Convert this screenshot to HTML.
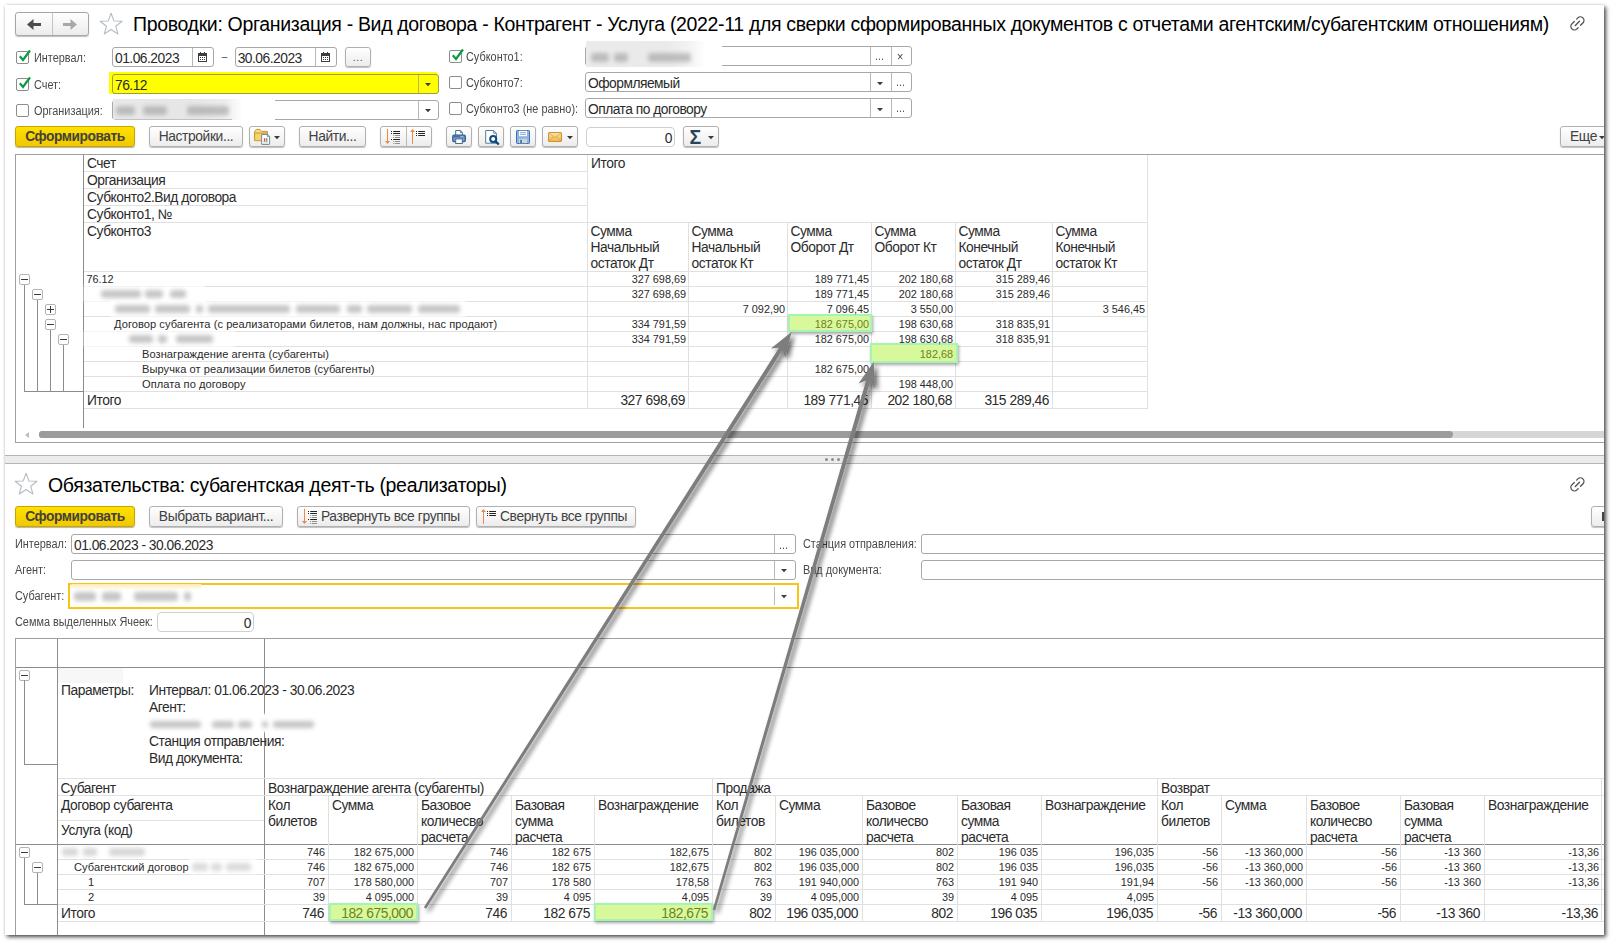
<!DOCTYPE html>
<html lang="ru"><head><meta charset="utf-8"><title>1C</title>
<style>
html,body{margin:0;padding:0;background:#fff;}
body{width:1613px;height:944px;overflow:hidden;position:relative;font-family:"Liberation Sans",sans-serif;color:#222;}
#frame{position:absolute;left:5px;top:5px;width:1599px;height:930px;background:#fff;overflow:hidden;}
#shadow{position:absolute;left:5px;top:5px;width:1599px;height:930px;box-shadow:2px 2px 4px rgba(0,0,0,.7), 0 0 2px rgba(0,0,0,.12);}
#in{position:absolute;left:-5px;top:-5px;width:1613px;height:944px;}
#in div{position:absolute;box-sizing:border-box;}
.t{white-space:nowrap;line-height:16px;font-size:12.85px;color:#222;}
.h{font-size:13.8px;letter-spacing:-0.445px;color:#2b2b2b;}
.r{text-align:right;}
.lab{font-size:12px;color:#4a4a4a;line-height:14px;transform:scaleX(0.908);transform-origin:0 0;}
.inp{border:1px solid #a8a8a8;border-radius:3px;background:#fff;}
.it{font-size:13.8px;letter-spacing:-0.5px;color:#2a2a2a;line-height:16px;}
.btn{border:1px solid #b0b0b0;border-radius:3px;background:linear-gradient(#fff,#ececec);box-shadow:0 1px 1px rgba(0,0,0,.25);}
.bt{font-size:13.8px;letter-spacing:-0.38px;color:#414141;line-height:18px;text-align:center;white-space:nowrap;}
.ybtn{border:1px solid #c8a500;border-radius:3px;background:linear-gradient(#ffe100,#f0c800);box-shadow:0 1px 1px rgba(0,0,0,.3);}
.d{font-size:11.1px;line-height:14px;letter-spacing:0.05px;color:#2a2a2a;}
.cb{border:1px solid #8c8c8c;border-radius:2px;background:#fff;}
.blur{filter:blur(2.5px);background:#c9c9c9;border-radius:4px;}
.tri{width:0;height:0;border-left:2.5px solid transparent;border-right:2.5px solid transparent;border-top:3px solid #444;}
svg{position:absolute;overflow:visible;}
.n{font-size:10.85px;letter-spacing:0;}
.hl{color:#6f7f1f !important;}

</style></head>
<body>
<div id="shadow"></div><div id="frame"><div id="in">
<div class="btn" style="left:15px;top:12px;width:74px;height:24px;border-color:#a6a6a6;"></div>
<div class="l" style="left:52px;top:13px;width:1px;height:22px;background:#c4c4c4"></div>
<svg style="left:15px;top:12px" width="74" height="25" viewBox="0 0 74 25"><path d="M12 12.5 L18.5 7 V11 H26 V14 H18.5 V18 Z" fill="#4d4d4d"/><path d="M62 12.5 L55.5 7 V11 H48 V14 H55.5 V18 Z" fill="#a9a9a9"/></svg>
<svg style="left:99.4px;top:12.2px" width="24.2" height="23.7" viewBox="0 0 22 22" preserveAspectRatio="none"><path d="M11 1.2 L13.6 8.3 L21 8.6 L15.2 13.2 L17.2 20.4 L11 16.2 L4.8 20.4 L6.8 13.2 L1 8.6 L8.4 8.3 Z" fill="#fff" stroke="#b4bcc4" stroke-width="1" stroke-linejoin="round"/></svg>
<div class="t " style="left:133px;top:13px;font-size:19.5px;letter-spacing:-0.33px;line-height:22px;color:#000;">Проводки: Организация - Вид договора - Контрагент - Услуга (2022-11 для сверки сформированных документов с отчетами агентским/субагентским отношениям)</div>
<svg style="left:1569px;top:15px" width="16.8" height="16.8" viewBox="0 0 16 16"><g transform="rotate(-45 8 8)" fill="none" stroke="#505050" stroke-width="1.25" stroke-linecap="round"><path d="M7.2 4.6 H4 A3.4 3.4 0 0 0 4 11.4 H5.6"/><path d="M8.8 11.4 H12 A3.4 3.4 0 0 0 12 4.6 H10.4"/><path d="M5.2 8 H10.8"/></g></svg>
<div class="cb" style="left:16px;top:51px;width:13px;height:13px;"><svg style="left:1px;top:-3px" width="14" height="14" viewBox="0 0 14 14"><path d="M1.8 7.2 L5 11 L12 1.5" fill="none" stroke="#0a9a46" stroke-width="2.2"/></svg></div>
<div class="t lab" style="left:33.8px;top:51px;">Интервал:</div>
<div class="inp" style="left:112px;top:47px;width:102px;height:20px;"></div>
<div class="l" style="left:192px;top:48px;width:1px;height:18px;background:#b8b8b8"></div>
<div class="t it" style="left:115px;top:51px;">01.06.2023</div>
<svg style="left:198px;top:52px" width="9" height="10" viewBox="0 0 9 10" shape-rendering="crispEdges"><rect x="0" y="1" width="9" height="9" rx="1" fill="#3e3e3e"/><rect x="1" y="4" width="7" height="5" fill="#fff"/><rect x="2" y="0" width="1" height="2" fill="#3e3e3e"/><rect x="6" y="0" width="1" height="2" fill="#3e3e3e"/><path d="M2 5.5 h1 M4 5.5 h1 M6 5.5 h1 M2 7.5 h1 M4 7.5 h1 M6 7.5 h1" stroke="#3e3e3e" stroke-width="1"/></svg>
<div class="t " style="left:221.7px;top:50px;font-size:10px;line-height:14px;color:#444;">–</div>
<div class="inp" style="left:235px;top:47px;width:102px;height:20px;"></div>
<div class="l" style="left:315px;top:48px;width:1px;height:18px;background:#b8b8b8"></div>
<div class="t it" style="left:237.7px;top:51px;">30.06.2023</div>
<svg style="left:321px;top:52px" width="9" height="10" viewBox="0 0 9 10" shape-rendering="crispEdges"><rect x="0" y="1" width="9" height="9" rx="1" fill="#3e3e3e"/><rect x="1" y="4" width="7" height="5" fill="#fff"/><rect x="2" y="0" width="1" height="2" fill="#3e3e3e"/><rect x="6" y="0" width="1" height="2" fill="#3e3e3e"/><path d="M2 5.5 h1 M4 5.5 h1 M6 5.5 h1 M2 7.5 h1 M4 7.5 h1 M6 7.5 h1" stroke="#3e3e3e" stroke-width="1"/></svg>
<div class="btn" style="left:345px;top:46.5px;width:26px;height:20.5px;"><div class="t" style="left:0;width:100%;top:1px;text-align:center;font-size:11px;color:#555;letter-spacing:0.5px">...</div></div>
<div class="cb" style="left:449px;top:50px;width:13px;height:13px;"><svg style="left:1px;top:-3px" width="14" height="14" viewBox="0 0 14 14"><path d="M1.8 7.2 L5 11 L12 1.5" fill="none" stroke="#0a9a46" stroke-width="2.2"/></svg></div>
<div class="t lab" style="left:466.2px;top:50.3px;">Субконто1:</div>
<div class="inp" style="left:585px;top:46px;width:327px;height:20px;"></div>
<div class="l" style="left:870px;top:47px;width:1px;height:18px;background:#b8b8b8"></div>
<div class="l" style="left:891px;top:47px;width:1px;height:18px;background:#b8b8b8"></div>
<div class="t lab" style="left:875px;top:49px;color:#555">...</div>
<div class="t lab" style="left:897px;top:50px;font-size:12px;color:#444">×</div>
<div style="left:586px;top:41px;width:136px;height:25.5px;background:linear-gradient(90deg,#ebebeb,#eaeaea 60%,#f2f2f2 75%,#fff 88%);"></div>
<div style="left:586px;top:41px;width:136px;height:25.5px;filter:blur(2px);opacity:0.5;"><div style="left:5px;top:11.5px;width:18px;height:9px;background:#8e8e8e;border-radius:3px;"></div><div style="left:28px;top:11.5px;width:14px;height:9px;background:#8e8e8e;border-radius:3px;"></div><div style="left:62px;top:11.5px;width:43px;height:9px;background:#8e8e8e;border-radius:3px;"></div></div>
<div class="cb" style="left:16px;top:78px;width:13px;height:13px;"><svg style="left:1px;top:-3px" width="14" height="14" viewBox="0 0 14 14"><path d="M1.8 7.2 L5 11 L12 1.5" fill="none" stroke="#0a9a46" stroke-width="2.2"/></svg></div>
<div class="t lab" style="left:33.8px;top:78px;">Счет:</div>
<div class="" style="left:109px;top:72px;width:328px;height:22px;background:#ffff00;"></div>
<div class="inp" style="left:112px;top:74px;width:327px;height:20px;background:#ffff00;border-color:#9c9c46;"></div>
<div class="l" style="left:418px;top:75px;width:1px;height:18px;background:#b8b85a"></div>
<div class="t it" style="left:115px;top:78px;">76.12</div>
<svg style="left:424.5px;top:82.6px" width="6" height="4" viewBox="0 0 6 4"><path d="M0 0 H6 L3 3.3 Z" fill="#3a3a3a"/></svg>
<div class="cb" style="left:449px;top:76px;width:13px;height:13px;"></div>
<div class="t lab" style="left:466.2px;top:76.3px;">Субконто7:</div>
<div class="inp" style="left:585px;top:72px;width:327px;height:20px;"></div>
<div class="l" style="left:870px;top:73px;width:1px;height:18px;background:#b8b8b8"></div>
<div class="l" style="left:891px;top:73px;width:1px;height:18px;background:#b8b8b8"></div>
<div class="t it" style="left:588px;top:76px;">Оформляемый</div>
<svg style="left:876.5px;top:81.6px" width="6" height="4" viewBox="0 0 6 4"><path d="M0 0 H6 L3 3.3 Z" fill="#3a3a3a"/></svg>
<div class="t lab" style="left:896px;top:75px;color:#555">...</div>
<div class="cb" style="left:16px;top:104px;width:13px;height:13px;"></div>
<div class="t lab" style="left:33.8px;top:104px;">Организация:</div>
<div class="inp" style="left:112px;top:100px;width:327px;height:20px;"></div>
<div class="l" style="left:418px;top:101px;width:1px;height:18px;background:#b8b8b8"></div>
<svg style="left:424.5px;top:108.6px" width="6" height="4" viewBox="0 0 6 4"><path d="M0 0 H6 L3 3.3 Z" fill="#3a3a3a"/></svg>
<div style="left:113px;top:99px;width:162px;height:20.5px;background:linear-gradient(90deg,#e9e9e9,#e6e6e6 50%,#ececec 68%,#fff 80%);"></div>
<div style="left:113px;top:99px;width:162px;height:20.5px;filter:blur(2px);opacity:0.5;"><div style="left:3px;top:6.5px;width:19px;height:9px;background:#8e8e8e;border-radius:3px;"></div><div style="left:30px;top:6.5px;width:24px;height:9px;background:#8e8e8e;border-radius:3px;"></div><div style="left:74px;top:6.5px;width:42px;height:9px;background:#8e8e8e;border-radius:3px;"></div></div>
<div class="l" style="left:115px;top:119px;width:117px;height:1px;background:#c2c2c2"></div>
<div class="cb" style="left:449px;top:102px;width:13px;height:13px;"></div>
<div class="t lab" style="left:466.2px;top:102.3px;">Субконто3 (не равно):</div>
<div class="inp" style="left:585px;top:98px;width:327px;height:20px;"></div>
<div class="l" style="left:870px;top:99px;width:1px;height:18px;background:#b8b8b8"></div>
<div class="l" style="left:891px;top:99px;width:1px;height:18px;background:#b8b8b8"></div>
<div class="t it" style="left:588px;top:102px;">Оплата по договору</div>
<svg style="left:876.5px;top:107.6px" width="6" height="4" viewBox="0 0 6 4"><path d="M0 0 H6 L3 3.3 Z" fill="#3a3a3a"/></svg>
<div class="t lab" style="left:896px;top:101px;color:#555">...</div>
<div class="ybtn" style="left:15px;top:126px;width:120px;height:21px;"><div class="t" style="left:0;width:100%;top:1px;text-align:center;font-size:13.8px;letter-spacing:-0.47px;font-weight:bold;color:#45423a;line-height:17px">Сформировать</div></div>
<div class="btn" style="left:149px;top:126px;width:94px;height:21px;"><div class="bt" style="left:0;width:100%;top:1px">Настройки...</div></div>
<div class="btn" style="left:249px;top:126px;width:36px;height:21px;"></div>
<svg style="left:253px;top:128px" width="19" height="18" viewBox="0 0 19 18"><path d="M1.6 12.6 V3.6 L3.4 1.4 H7 L8.8 3.4 H14.4 V6" fill="#f9de7c" stroke="#c9953a" stroke-width="1" stroke-linejoin="round"/><rect x="1.6" y="5" width="12.8" height="7.7" rx="0.6" fill="#f5d468" stroke="#c9953a" stroke-width="1"/><path d="M8.6 7.2 Q8.6 6.4 9.4 6.4 H14.3 L16.6 8.7 V15.6 Q16.6 16.4 15.8 16.4 H9.4 Q8.6 16.4 8.6 15.6 Z" fill="#fff" stroke="#7d91a3" stroke-width="1.1"/><path d="M14.3 6.4 V8.7 H16.6" fill="#aab8c4" stroke="#7d91a3" stroke-width="0.8"/><rect x="10.9" y="10.2" width="1.4" height="3.3" fill="#f0453a"/><rect x="13" y="10.2" width="1.4" height="3.3" fill="#4cb84c"/><path d="M10.2 13.9 H15.1" stroke="#9a9a9a" stroke-width="0.7"/></svg>
<svg style="left:274.0px;top:136.0px" width="6" height="4" viewBox="0 0 6 4"><path d="M0 0 H6 L3 3.3 Z" fill="#3a3a3a"/></svg>
<div class="btn" style="left:299px;top:126px;width:67px;height:21px;"><div class="bt" style="left:0;width:100%;top:1px">Найти...</div></div>
<div class="btn" style="left:380px;top:126px;width:52px;height:21px;"></div>
<div class="l" style="left:406px;top:127px;width:1px;height:20px;background:#bcbcbc"></div>
<svg style="left:384px;top:128px" width="18" height="17" viewBox="0 0 18 17"><path d="M3.5 0.9 V14" stroke="#f0884a" stroke-width="1" fill="none"/><path d="M1 13 H6 L3.5 15.9 Z" fill="#f0884a"/><rect x="7" y="3" width="1" height="1" fill="#222"/><rect x="9.2" y="3" width="6.8" height="1" fill="#222"/><rect x="7" y="5" width="1" height="1" fill="#222"/><rect x="9.2" y="5" width="6.8" height="1" fill="#222"/><rect x="7" y="11" width="1" height="1" fill="#222"/><rect x="9.2" y="11" width="6.8" height="1" fill="#222"/><rect x="9.2" y="7" width="1" height="1" fill="#909090"/><rect x="11" y="7" width="5" height="1" fill="#909090"/><rect x="9.2" y="9" width="1" height="1" fill="#909090"/><rect x="11" y="9" width="5" height="1" fill="#909090"/><rect x="9.2" y="13" width="1" height="1" fill="#909090"/><rect x="11" y="13" width="5" height="1" fill="#909090"/><rect x="9.2" y="15" width="1" height="1" fill="#909090"/><rect x="11" y="15" width="5" height="1" fill="#909090"/></svg>
<svg style="left:408px;top:128px" width="18" height="17" viewBox="0 0 18 17"><path d="M4.5 3 V15.9" stroke="#f0884a" stroke-width="1" fill="none"/><path d="M2 3.9 H7 L4.5 0.9 Z" fill="#f0884a"/><rect x="8" y="3" width="1" height="1" fill="#222"/><rect x="10.2" y="3" width="6.8" height="1" fill="#222"/><rect x="8" y="5" width="1" height="1" fill="#222"/><rect x="10.2" y="5" width="6.8" height="1" fill="#222"/><rect x="8" y="7" width="1" height="1" fill="#222"/><rect x="10.2" y="7" width="6.8" height="1" fill="#222"/></svg>
<div class="btn" style="left:446px;top:126px;width:26px;height:21px;"></div>
<svg style="left:451px;top:129px" width="16" height="16" viewBox="0 0 16 16"><path d="M4.7 6 V1.5 H9.3 L11.3 3.5 V6" fill="#fff" stroke="#4a6a90" stroke-width="1"/><path d="M9.3 1.5 V3.5 H11.3" fill="none" stroke="#4a6a90" stroke-width="0.8"/><rect x="1.8" y="6.2" width="12.5" height="6.4" rx="1.3" fill="#7aa0cd" stroke="#2f5b8c" stroke-width="1.3"/><rect x="2.4" y="6.6" width="11.3" height="1.8" fill="#3f6ea3"/><rect x="9.6" y="7" width="1" height="0.9" fill="#fff"/><rect x="11.4" y="7" width="1" height="0.9" fill="#fff"/><rect x="4.7" y="9.9" width="6.6" height="4.6" fill="#fff" stroke="#4a6a90" stroke-width="1"/></svg>
<div class="btn" style="left:478px;top:126px;width:26px;height:21px;"></div>
<svg style="left:484px;top:129px" width="16" height="16" viewBox="0 0 16 16"><path d="M1.7 1.5 H9.6 L12.4 4.3 V14.2 H1.7 Z" fill="#fff" stroke="#5b7a9b" stroke-width="1"/><path d="M9.6 1.5 V4.3 H12.4" fill="none" stroke="#5b7a9b" stroke-width="0.8"/><circle cx="9.2" cy="10.1" r="3" fill="#fff" stroke="#0b4a80" stroke-width="2"/><path d="M11.5 12.4 L14.2 14.8" stroke="#0b4a80" stroke-width="2.4" stroke-linecap="round"/></svg>
<div class="btn" style="left:510px;top:126px;width:26px;height:21px;"></div>
<svg style="left:516px;top:130px" width="14" height="14" viewBox="0 0 14 14"><rect x="0.5" y="0.5" width="13" height="13" rx="0.8" fill="#8cb3e3" stroke="#3f6fae" stroke-width="1"/><rect x="3" y="0.8" width="8" height="5.4" fill="#fff"/><path d="M4 2.6 h6 M4 4.4 h6" stroke="#7fa3cf" stroke-width="0.9"/><rect x="3" y="8.8" width="8" height="4.4" fill="#cfd6d2"/><rect x="4.2" y="9.8" width="1.7" height="3.2" fill="#3f6fae"/></svg>
<div class="btn" style="left:542px;top:126px;width:36px;height:21px;"></div>
<svg style="left:547.5px;top:132.3px" width="14" height="10" viewBox="0 0 16 12" preserveAspectRatio="none"><defs><linearGradient id="mg" x1="0" y1="0" x2="0" y2="1"><stop offset="0" stop-color="#fbe4ac"/><stop offset="1" stop-color="#f0b646"/></linearGradient></defs><rect x="0.6" y="0.6" width="14.8" height="10.8" rx="1.3" fill="url(#mg)" stroke="#cf9230" stroke-width="1.2"/><path d="M1 1 L8 7 L15 1 M1 11 L6 6 M15 11 L10 6" fill="none" stroke="#d9a040" stroke-width="0.9"/></svg>
<svg style="left:566.5px;top:136.0px" width="6" height="4" viewBox="0 0 6 4"><path d="M0 0 H6 L3 3.3 Z" fill="#3a3a3a"/></svg>
<div class="inp" style="left:586px;top:127px;width:89px;height:20px;border-color:#cfcfcf;border-radius:4px;"></div>
<div class="t r it" style="left:372px;width:300px;top:131px;">0</div>
<div class="btn" style="left:683px;top:126px;width:36px;height:21px;"></div>
<div class="t " style="left:689.5px;top:126px;font-size:19.5px;font-weight:bold;color:#2a4358;line-height:22px;">Σ</div>
<svg style="left:707.8px;top:136.2px" width="6" height="4" viewBox="0 0 6 4"><path d="M0 0 H6 L3 3.3 Z" fill="#3a3a3a"/></svg>
<div class="btn" style="left:1560px;top:126px;width:60px;height:21px;"><div class="bt" style="left:9px;top:1px">Еще</div></div>
<svg style="left:1598.5px;top:136.0px" width="6" height="4" viewBox="0 0 6 4"><path d="M0 0 H6 L3 3.3 Z" fill="#3a3a3a"/></svg>
<div class="" style="left:15px;top:154px;width:1600px;height:289px;border:1px solid #a0a0a0;border-right:none;background:#fff;"></div>
<div class="l" style="left:83px;top:155px;width:1px;height:273px;background:#8c8c8c"></div>
<div class="l" style="left:84px;top:171px;width:503px;height:1px;background:#e0e0e0"></div>
<div class="l" style="left:84px;top:188px;width:503px;height:1px;background:#e0e0e0"></div>
<div class="l" style="left:84px;top:205px;width:503px;height:1px;background:#e0e0e0"></div>
<div class="l" style="left:84px;top:222px;width:1064px;height:1px;background:#e0e0e0"></div>
<div class="l" style="left:84px;top:271px;width:1064px;height:1px;background:#e0e0e0"></div>
<div class="l" style="left:84px;top:286px;width:1064px;height:1px;background:#e0e0e0"></div>
<div class="l" style="left:84px;top:301px;width:1064px;height:1px;background:#e0e0e0"></div>
<div class="l" style="left:84px;top:316px;width:1064px;height:1px;background:#e0e0e0"></div>
<div class="l" style="left:84px;top:331px;width:1064px;height:1px;background:#e0e0e0"></div>
<div class="l" style="left:84px;top:346px;width:1064px;height:1px;background:#e0e0e0"></div>
<div class="l" style="left:84px;top:361px;width:1064px;height:1px;background:#e0e0e0"></div>
<div class="l" style="left:84px;top:376px;width:1064px;height:1px;background:#e0e0e0"></div>
<div class="l" style="left:84px;top:391px;width:1064px;height:1px;background:#e0e0e0"></div>
<div class="l" style="left:84px;top:408px;width:1064px;height:1px;background:#e0e0e0"></div>
<div class="l" style="left:587px;top:155px;width:1px;height:253px;background:#e0e0e0"></div>
<div class="l" style="left:1147px;top:155px;width:1px;height:253px;background:#e0e0e0"></div>
<div class="l" style="left:688px;top:223px;width:1px;height:185px;background:#e0e0e0"></div>
<div class="l" style="left:787px;top:223px;width:1px;height:185px;background:#e0e0e0"></div>
<div class="l" style="left:871px;top:223px;width:1px;height:185px;background:#e0e0e0"></div>
<div class="l" style="left:955px;top:223px;width:1px;height:185px;background:#e0e0e0"></div>
<div class="l" style="left:1052px;top:223px;width:1px;height:185px;background:#e0e0e0"></div>
<div class="t h" style="left:87px;top:156px;">Счет</div>
<div class="t h" style="left:87px;top:173px;">Организация</div>
<div class="t h" style="left:87px;top:190px;">Субконто2.Вид договора</div>
<div class="t h" style="left:87px;top:207px;">Субконто1, №</div>
<div class="t h" style="left:87px;top:224px;">Субконто3</div>
<div class="t h" style="left:591px;top:156px;">Итого</div>
<div class="t h" style="left:590.5px;top:224px;">Сумма</div>
<div class="t h" style="left:590.5px;top:240px;">Начальный</div>
<div class="t h" style="left:590.5px;top:256px;">остаток Дт</div>
<div class="t h" style="left:691.5px;top:224px;">Сумма</div>
<div class="t h" style="left:691.5px;top:240px;">Начальный</div>
<div class="t h" style="left:691.5px;top:256px;">остаток Кт</div>
<div class="t h" style="left:790.5px;top:224px;">Сумма</div>
<div class="t h" style="left:790.5px;top:240px;">Оборот Дт</div>
<div class="t h" style="left:874.5px;top:224px;">Сумма</div>
<div class="t h" style="left:874.5px;top:240px;">Оборот Кт</div>
<div class="t h" style="left:958.5px;top:224px;">Сумма</div>
<div class="t h" style="left:958.5px;top:240px;">Конечный</div>
<div class="t h" style="left:958.5px;top:256px;">остаток Дт</div>
<div class="t h" style="left:1055.5px;top:224px;">Сумма</div>
<div class="t h" style="left:1055.5px;top:240px;">Конечный</div>
<div class="t h" style="left:1055.5px;top:256px;">остаток Кт</div>
<div class="" style="left:788px;top:314px;width:84px;height:17.5px;background:#d8f99b;border:2.5px solid #a5f4b4;box-shadow:1px 2px 3px rgba(0,0,0,.35);"></div>
<div class="" style="left:870px;top:343px;width:88px;height:20px;background:#d8f99b;border:2.5px solid #a5f4b4;box-shadow:1px 2px 3px rgba(0,0,0,.35);"></div>
<div class="t d n" style="left:86.5px;top:272px;">76.12</div>
<div class="t r d n" style="left:386px;width:300px;top:272px;">327 698,69</div>
<div class="t r d n" style="left:569px;width:300px;top:272px;">189 771,45</div>
<div class="t r d n" style="left:653px;width:300px;top:272px;">202 180,68</div>
<div class="t r d n" style="left:750px;width:300px;top:272px;">315 289,46</div>
<div class="t r d n" style="left:386px;width:300px;top:287px;">327 698,69</div>
<div class="t r d n" style="left:569px;width:300px;top:287px;">189 771,45</div>
<div class="t r d n" style="left:653px;width:300px;top:287px;">202 180,68</div>
<div class="t r d n" style="left:750px;width:300px;top:287px;">315 289,46</div>
<div class="t r d n" style="left:485px;width:300px;top:302px;">7 092,90</div>
<div class="t r d n" style="left:569px;width:300px;top:302px;">7 096,45</div>
<div class="t r d n" style="left:653px;width:300px;top:302px;">3 550,00</div>
<div class="t r d n" style="left:845px;width:300px;top:302px;">3 546,45</div>
<div class="t d" style="left:114px;top:317px;">Договор субагента (с реализаторами билетов, нам должны, нас продают)</div>
<div class="t r d n" style="left:386px;width:300px;top:317px;">334 791,59</div>
<div class="t r d n hl" style="left:569px;width:300px;top:317px;">182 675,00</div>
<div class="t r d n" style="left:653px;width:300px;top:317px;">198 630,68</div>
<div class="t r d n" style="left:750px;width:300px;top:317px;">318 835,91</div>
<div class="t r d n" style="left:386px;width:300px;top:332px;">334 791,59</div>
<div class="t r d n" style="left:569px;width:300px;top:332px;">182 675,00</div>
<div class="t r d n" style="left:653px;width:300px;top:332px;">198 630,68</div>
<div class="t r d n" style="left:750px;width:300px;top:332px;">318 835,91</div>
<div class="t d" style="left:142px;top:347px;">Вознаграждение агента (субагенты)</div>
<div class="t r d n hl" style="left:653px;width:300px;top:347px;">182,68</div>
<div class="t d" style="left:142px;top:362px;">Выручка от реализации билетов (субагенты)</div>
<div class="t r d n" style="left:569px;width:300px;top:362px;">182 675,00</div>
<div class="t d" style="left:142px;top:377px;">Оплата по договору</div>
<div class="t r d n" style="left:653px;width:300px;top:377px;">198 448,00</div>
<div style="left:85px;top:287px;width:119px;height:14px;background:#fff;box-shadow:0 0 2px 1px #fff;"></div>
<div style="left:85px;top:287px;width:119px;height:14px;filter:blur(2px);opacity:0.5;"><div style="left:16px;top:3.0px;width:40px;height:8px;background:#8e8e8e;border-radius:3px;"></div><div style="left:60px;top:3.0px;width:18px;height:8px;background:#8e8e8e;border-radius:3px;"></div><div style="left:85px;top:3.0px;width:16px;height:8px;background:#8e8e8e;border-radius:3px;"></div></div>
<div style="left:111px;top:302px;width:354px;height:14px;background:#fff;box-shadow:0 0 2px 1px #fff;"></div>
<div style="left:111px;top:302px;width:354px;height:14px;filter:blur(2px);opacity:0.5;"><div style="left:4px;top:3.0px;width:35px;height:8px;background:#8e8e8e;border-radius:3px;"></div><div style="left:44px;top:3.0px;width:35px;height:8px;background:#8e8e8e;border-radius:3px;"></div><div style="left:85px;top:3.0px;width:7px;height:8px;background:#8e8e8e;border-radius:3px;"></div><div style="left:97px;top:3.0px;width:82px;height:8px;background:#8e8e8e;border-radius:3px;"></div><div style="left:185px;top:3.0px;width:44px;height:8px;background:#8e8e8e;border-radius:3px;"></div><div style="left:236px;top:3.0px;width:15px;height:8px;background:#8e8e8e;border-radius:3px;"></div><div style="left:256px;top:3.0px;width:45px;height:8px;background:#8e8e8e;border-radius:3px;"></div><div style="left:307px;top:3.0px;width:42px;height:8px;background:#8e8e8e;border-radius:3px;"></div></div>
<div style="left:85px;top:332px;width:149px;height:14px;background:#fff;box-shadow:0 0 2px 1px #fff;"></div>
<div style="left:85px;top:332px;width:149px;height:14px;filter:blur(2px);opacity:0.5;"><div style="left:44px;top:3.0px;width:24px;height:8px;background:#8e8e8e;border-radius:3px;"></div><div style="left:73px;top:3.0px;width:9px;height:8px;background:#8e8e8e;border-radius:3px;"></div><div style="left:91px;top:3.0px;width:37px;height:8px;background:#8e8e8e;border-radius:3px;"></div></div>
<div class="t h" style="left:87px;top:393px;">Итого</div>
<div class="t r h" style="left:385px;width:300px;top:393px;">327 698,69</div>
<div class="t r h" style="left:568px;width:300px;top:393px;">189 771,45</div>
<div class="t r h" style="left:652px;width:300px;top:393px;">202 180,68</div>
<div class="t r h" style="left:749px;width:300px;top:393px;">315 289,46</div>
<div class="l" style="left:24px;top:284px;width:1px;height:107px;background:#8c8c8c"></div>
<div class="l" style="left:37px;top:299px;width:1px;height:92px;background:#8c8c8c"></div>
<div class="l" style="left:50px;top:329px;width:1px;height:62px;background:#8c8c8c"></div>
<div class="l" style="left:63px;top:344px;width:1px;height:47px;background:#8c8c8c"></div>
<div class="l" style="left:24px;top:391px;width:59px;height:1px;background:#8c8c8c"></div>
<div class="" style="left:19px;top:274px;width:11px;height:11px;border:1px solid #b4b4b4;border-radius:2px;background:#fff;"></div>
<div class="l" style="left:21px;top:279px;width:7px;height:1px;background:#3c3c3c"></div>
<div class="" style="left:32px;top:289px;width:11px;height:11px;border:1px solid #b4b4b4;border-radius:2px;background:#fff;"></div>
<div class="l" style="left:34px;top:294px;width:7px;height:1px;background:#3c3c3c"></div>
<div class="" style="left:45px;top:304px;width:11px;height:11px;border:1px solid #b4b4b4;border-radius:2px;background:#fff;"></div>
<div class="l" style="left:47px;top:309px;width:7px;height:1px;background:#3c3c3c"></div>
<div class="l" style="left:50px;top:306px;width:1px;height:7px;background:#3c3c3c"></div>
<div class="" style="left:45px;top:319px;width:11px;height:11px;border:1px solid #b4b4b4;border-radius:2px;background:#fff;"></div>
<div class="l" style="left:47px;top:324px;width:7px;height:1px;background:#3c3c3c"></div>
<div class="" style="left:58px;top:334px;width:11px;height:11px;border:1px solid #b4b4b4;border-radius:2px;background:#fff;"></div>
<div class="l" style="left:60px;top:339px;width:7px;height:1px;background:#3c3c3c"></div>
<div class="" style="left:39px;top:431px;width:1414px;height:7px;background:#9c9c9c;border-radius:4px;"></div>
<div class="" style="left:1449px;top:431px;width:160px;height:7px;background:#d6d6d6;"></div>
<div class="" style="left:39px;top:431px;width:1414px;height:7px;background:#9c9c9c;border-radius:4px;"></div>
<div style="left:25px;top:432px;width:0;height:0;border-top:3px solid transparent;border-bottom:3px solid transparent;border-right:4px solid #bdbdbd"></div>
<div class="" style="left:5px;top:455px;width:1600px;height:9px;background:#ececec;border-top:1px solid #b4b4b4;border-bottom:1px solid #b4b4b4;"></div>
<div class="" style="left:825px;top:458px;width:3px;height:3px;background:#8c8c8c;border-radius:1.5px;"></div>
<div class="" style="left:831px;top:458px;width:3px;height:3px;background:#8c8c8c;border-radius:1.5px;"></div>
<div class="" style="left:837px;top:458px;width:3px;height:3px;background:#8c8c8c;border-radius:1.5px;"></div>
<svg style="left:14.1px;top:472.2px" width="24.2" height="23.7" viewBox="0 0 22 22" preserveAspectRatio="none"><path d="M11 1.2 L13.6 8.3 L21 8.6 L15.2 13.2 L17.2 20.4 L11 16.2 L4.8 20.4 L6.8 13.2 L1 8.6 L8.4 8.3 Z" fill="#fff" stroke="#b4bcc4" stroke-width="1" stroke-linejoin="round"/></svg>
<div class="t " style="left:48px;top:474px;font-size:19.5px;letter-spacing:-0.33px;line-height:22px;color:#000;">Обязательства: субагентская деят-ть (реализаторы)</div>
<svg style="left:1569px;top:475.5px" width="16.8" height="16.8" viewBox="0 0 16 16"><g transform="rotate(-45 8 8)" fill="none" stroke="#505050" stroke-width="1.25" stroke-linecap="round"><path d="M7.2 4.6 H4 A3.4 3.4 0 0 0 4 11.4 H5.6"/><path d="M8.8 11.4 H12 A3.4 3.4 0 0 0 12 4.6 H10.4"/><path d="M5.2 8 H10.8"/></g></svg>
<div class="ybtn" style="left:15px;top:506px;width:120px;height:21px;"><div class="t" style="left:0;width:100%;top:1px;text-align:center;font-size:13.8px;letter-spacing:-0.47px;font-weight:bold;color:#45423a;line-height:17px">Сформировать</div></div>
<div class="btn" style="left:149px;top:506px;width:134px;height:21px;"><div class="bt" style="left:0;width:100%;top:1px">Выбрать вариант...</div></div>
<div class="btn" style="left:297px;top:506px;width:173px;height:21px;"><div class="bt" style="left:23px;top:1px">Развернуть все группы</div></div>
<svg style="left:301px;top:507.5px" width="18" height="17" viewBox="0 0 18 17"><path d="M3.5 0.9 V14" stroke="#f0884a" stroke-width="1" fill="none"/><path d="M1 13 H6 L3.5 15.9 Z" fill="#f0884a"/><rect x="7" y="3" width="1" height="1" fill="#222"/><rect x="9.2" y="3" width="6.8" height="1" fill="#222"/><rect x="7" y="5" width="1" height="1" fill="#222"/><rect x="9.2" y="5" width="6.8" height="1" fill="#222"/><rect x="7" y="11" width="1" height="1" fill="#222"/><rect x="9.2" y="11" width="6.8" height="1" fill="#222"/><rect x="9.2" y="7" width="1" height="1" fill="#909090"/><rect x="11" y="7" width="5" height="1" fill="#909090"/><rect x="9.2" y="9" width="1" height="1" fill="#909090"/><rect x="11" y="9" width="5" height="1" fill="#909090"/><rect x="9.2" y="13" width="1" height="1" fill="#909090"/><rect x="11" y="13" width="5" height="1" fill="#909090"/><rect x="9.2" y="15" width="1" height="1" fill="#909090"/><rect x="11" y="15" width="5" height="1" fill="#909090"/></svg>
<div class="btn" style="left:476px;top:506px;width:160px;height:21px;"><div class="bt" style="left:23px;top:1px">Свернуть все группы</div></div>
<svg style="left:478.5px;top:507.5px" width="18" height="17" viewBox="0 0 18 17"><path d="M4.5 3 V15.9" stroke="#f0884a" stroke-width="1" fill="none"/><path d="M2 3.9 H7 L4.5 0.9 Z" fill="#f0884a"/><rect x="8" y="3" width="1" height="1" fill="#222"/><rect x="10.2" y="3" width="6.8" height="1" fill="#222"/><rect x="8" y="5" width="1" height="1" fill="#222"/><rect x="10.2" y="5" width="6.8" height="1" fill="#222"/><rect x="8" y="7" width="1" height="1" fill="#222"/><rect x="10.2" y="7" width="6.8" height="1" fill="#222"/></svg>
<div class="btn" style="left:1591px;top:506px;width:30px;height:21px;"></div>
<div class="" style="left:1602px;top:512px;width:4px;height:9px;background:#444;"></div>
<div class="t lab" style="left:15px;top:537px;">Интервал:</div>
<div class="inp" style="left:71px;top:534px;width:725px;height:20px;"></div>
<div class="l" style="left:774px;top:535px;width:1px;height:18px;background:#b8b8b8"></div>
<div class="t it" style="left:74px;top:538px;">01.06.2023 - 30.06.2023</div>
<div class="t lab" style="left:779px;top:538px;color:#555">...</div>
<div class="t lab" style="left:15px;top:563px;">Агент:</div>
<div class="inp" style="left:71px;top:560px;width:725px;height:20px;"></div>
<div class="l" style="left:774px;top:561px;width:1px;height:18px;background:#b8b8b8"></div>
<svg style="left:780.5px;top:568.6px" width="6" height="4" viewBox="0 0 6 4"><path d="M0 0 H6 L3 3.3 Z" fill="#3a3a3a"/></svg>
<div class="t lab" style="left:15px;top:589px;">Субагент:</div>
<div class="" style="left:68px;top:583px;width:731px;height:26px;border:2px solid #f5c518;background:#fff;"></div>
<div class="l" style="left:774px;top:587px;width:1px;height:18px;background:#b8b8b8"></div>
<svg style="left:780.5px;top:594.6px" width="6" height="4" viewBox="0 0 6 4"><path d="M0 0 H6 L3 3.3 Z" fill="#3a3a3a"/></svg>
<div style="left:71px;top:584px;width:130px;height:22.5px;background:linear-gradient(#fdebb0,#fff 6px);"></div>
<div style="left:71px;top:584px;width:130px;height:22.5px;filter:blur(2px);opacity:0.5;"><div style="left:3px;top:7.5px;width:22px;height:9px;background:#8e8e8e;border-radius:3px;"></div><div style="left:31px;top:7.5px;width:19px;height:9px;background:#8e8e8e;border-radius:3px;"></div><div style="left:63px;top:7.5px;width:44px;height:9px;background:#8e8e8e;border-radius:3px;"></div><div style="left:113px;top:7.5px;width:7px;height:9px;background:#8e8e8e;border-radius:3px;"></div></div>
<div class="t lab" style="left:15px;top:615px;">Семма выделенных Ячеек:</div>
<div class="inp" style="left:157px;top:612px;width:97px;height:20px;border-color:#cfcfcf;border-radius:4px;"></div>
<div class="t r it" style="left:-49px;width:300px;top:616px;">0</div>
<div class="t lab" style="left:803px;top:537px;">Станция отправления:</div>
<div class="inp" style="left:921px;top:534px;width:700px;height:20px;"></div>
<div class="t lab" style="left:803px;top:563px;">Вид документа:</div>
<div class="inp" style="left:921px;top:560px;width:700px;height:20px;"></div>
<div class="" style="left:15px;top:638px;width:1600px;height:320px;border:1px solid #a0a0a0;border-right:none;background:#fff;"></div>
<div class="l" style="left:57px;top:639px;width:1px;height:301px;background:#8c8c8c"></div>
<div class="l" style="left:264px;top:639px;width:1px;height:301px;background:#8c8c8c"></div>
<div class="l" style="left:16px;top:667px;width:1594px;height:1px;background:#8c8c8c"></div>
<div class="l" style="left:16px;top:844px;width:1594px;height:1px;background:#8c8c8c"></div>
<div class="l" style="left:58px;top:778px;width:1552px;height:1px;background:#e0e0e0"></div>
<div class="l" style="left:58px;top:795px;width:1552px;height:1px;background:#e0e0e0"></div>
<div class="l" style="left:58px;top:820px;width:206px;height:1px;background:#e0e0e0"></div>
<div class="l" style="left:58px;top:859px;width:1552px;height:1px;background:#e0e0e0"></div>
<div class="l" style="left:58px;top:874px;width:1552px;height:1px;background:#e0e0e0"></div>
<div class="l" style="left:58px;top:889px;width:1552px;height:1px;background:#e0e0e0"></div>
<div class="l" style="left:58px;top:904px;width:1552px;height:1px;background:#e0e0e0"></div>
<div class="l" style="left:58px;top:921px;width:1552px;height:1px;background:#e0e0e0"></div>
<div class="l" style="left:712px;top:778px;width:1px;height:143px;background:#e0e0e0"></div>
<div class="l" style="left:1157px;top:778px;width:1px;height:143px;background:#e0e0e0"></div>
<div class="l" style="left:1601px;top:778px;width:1px;height:143px;background:#e0e0e0"></div>
<div class="l" style="left:328px;top:795px;width:1px;height:126px;background:#e0e0e0"></div>
<div class="l" style="left:417px;top:795px;width:1px;height:126px;background:#e0e0e0"></div>
<div class="l" style="left:511px;top:795px;width:1px;height:126px;background:#e0e0e0"></div>
<div class="l" style="left:594px;top:795px;width:1px;height:126px;background:#e0e0e0"></div>
<div class="l" style="left:775px;top:795px;width:1px;height:126px;background:#e0e0e0"></div>
<div class="l" style="left:862px;top:795px;width:1px;height:126px;background:#e0e0e0"></div>
<div class="l" style="left:957px;top:795px;width:1px;height:126px;background:#e0e0e0"></div>
<div class="l" style="left:1041px;top:795px;width:1px;height:126px;background:#e0e0e0"></div>
<div class="l" style="left:1221px;top:795px;width:1px;height:126px;background:#e0e0e0"></div>
<div class="l" style="left:1306px;top:795px;width:1px;height:126px;background:#e0e0e0"></div>
<div class="l" style="left:1400px;top:795px;width:1px;height:126px;background:#e0e0e0"></div>
<div class="l" style="left:1484px;top:795px;width:1px;height:126px;background:#e0e0e0"></div>
<div class="t h" style="left:61px;top:683px;">Параметры:</div>
<div class="t h" style="left:149px;top:683px;">Интервал: 01.06.2023 - 30.06.2023</div>
<div class="t h" style="left:149px;top:700px;">Агент:</div>
<div class="t h" style="left:149px;top:734px;">Станция отправления:</div>
<div class="t h" style="left:149px;top:751px;">Вид документа:</div>
<div style="left:147px;top:715px;width:171px;height:16px;background:#fff;box-shadow:0 0 2px 1px #fff;"></div>
<div style="left:147px;top:715px;width:171px;height:16px;filter:blur(2px);opacity:0.5;"><div style="left:3px;top:5.5px;width:51px;height:7px;background:#8e8e8e;border-radius:3px;"></div><div style="left:65px;top:5.5px;width:22px;height:7px;background:#8e8e8e;border-radius:3px;"></div><div style="left:91px;top:5.5px;width:14px;height:7px;background:#8e8e8e;border-radius:3px;"></div><div style="left:115px;top:5.5px;width:6px;height:7px;background:#8e8e8e;border-radius:3px;"></div><div style="left:126px;top:5.5px;width:41px;height:7px;background:#8e8e8e;border-radius:3px;"></div></div>
<div class="" style="left:58px;top:668px;width:65px;height:15px;background:#f7f7f7;"></div>
<div class="t h" style="left:60.5px;top:780.5px;">Субагент</div>
<div class="t h" style="left:61px;top:798px;">Договор субагента</div>
<div class="t h" style="left:61px;top:823px;">Услуга (код)</div>
<div class="t h" style="left:268px;top:780.5px;">Вознаграждение агента (субагенты)</div>
<div class="t h" style="left:716px;top:780.5px;">Продажа</div>
<div class="t h" style="left:1161px;top:780.5px;">Возврат</div>
<div class="t h" style="left:268px;top:798px;">Кол</div>
<div class="t h" style="left:268px;top:814px;">билетов</div>
<div class="t h" style="left:332px;top:798px;">Сумма</div>
<div class="t h" style="left:421px;top:798px;">Базовое</div>
<div class="t h" style="left:421px;top:814px;">количесво</div>
<div class="t h" style="left:421px;top:830px;">расчета</div>
<div class="t h" style="left:515px;top:798px;">Базовая</div>
<div class="t h" style="left:515px;top:814px;">сумма</div>
<div class="t h" style="left:515px;top:830px;">расчета</div>
<div class="t h" style="left:598px;top:798px;">Вознаграждение</div>
<div class="t h" style="left:716px;top:798px;">Кол</div>
<div class="t h" style="left:716px;top:814px;">билетов</div>
<div class="t h" style="left:779px;top:798px;">Сумма</div>
<div class="t h" style="left:866px;top:798px;">Базовое</div>
<div class="t h" style="left:866px;top:814px;">количесво</div>
<div class="t h" style="left:866px;top:830px;">расчета</div>
<div class="t h" style="left:961px;top:798px;">Базовая</div>
<div class="t h" style="left:961px;top:814px;">сумма</div>
<div class="t h" style="left:961px;top:830px;">расчета</div>
<div class="t h" style="left:1045px;top:798px;">Вознаграждение</div>
<div class="t h" style="left:1161px;top:798px;">Кол</div>
<div class="t h" style="left:1161px;top:814px;">билетов</div>
<div class="t h" style="left:1225px;top:798px;">Сумма</div>
<div class="t h" style="left:1310px;top:798px;">Базовое</div>
<div class="t h" style="left:1310px;top:814px;">количесво</div>
<div class="t h" style="left:1310px;top:830px;">расчета</div>
<div class="t h" style="left:1404px;top:798px;">Базовая</div>
<div class="t h" style="left:1404px;top:814px;">сумма</div>
<div class="t h" style="left:1404px;top:830px;">расчета</div>
<div class="t h" style="left:1488px;top:798px;">Вознаграждение</div>
<div class="" style="left:329px;top:903px;width:89px;height:18px;background:#d8f99b;border:2.5px solid #a5f4b4;box-shadow:1px 2px 3px rgba(0,0,0,.35);"></div>
<div class="" style="left:594px;top:903px;width:119px;height:18px;background:#d8f99b;border:2.5px solid #a5f4b4;box-shadow:1px 2px 3px rgba(0,0,0,.35);"></div>
<div class="t r d n" style="left:25px;width:300px;top:845px;">746</div>
<div class="t r d n" style="left:114px;width:300px;top:845px;">182 675,000</div>
<div class="t r d n" style="left:208px;width:300px;top:845px;">746</div>
<div class="t r d n" style="left:291px;width:300px;top:845px;">182 675</div>
<div class="t r d n" style="left:409px;width:300px;top:845px;">182,675</div>
<div class="t r d n" style="left:472px;width:300px;top:845px;">802</div>
<div class="t r d n" style="left:559px;width:300px;top:845px;">196 035,000</div>
<div class="t r d n" style="left:654px;width:300px;top:845px;">802</div>
<div class="t r d n" style="left:738px;width:300px;top:845px;">196 035</div>
<div class="t r d n" style="left:854px;width:300px;top:845px;">196,035</div>
<div class="t r d n" style="left:918px;width:300px;top:845px;">-56</div>
<div class="t r d n" style="left:1003px;width:300px;top:845px;">-13 360,000</div>
<div class="t r d n" style="left:1097px;width:300px;top:845px;">-56</div>
<div class="t r d n" style="left:1181px;width:300px;top:845px;">-13 360</div>
<div class="t r d n" style="left:1299px;width:300px;top:845px;">-13,36</div>
<div class="t r d n" style="left:25px;width:300px;top:860px;">746</div>
<div class="t r d n" style="left:114px;width:300px;top:860px;">182 675,000</div>
<div class="t r d n" style="left:208px;width:300px;top:860px;">746</div>
<div class="t r d n" style="left:291px;width:300px;top:860px;">182 675</div>
<div class="t r d n" style="left:409px;width:300px;top:860px;">182,675</div>
<div class="t r d n" style="left:472px;width:300px;top:860px;">802</div>
<div class="t r d n" style="left:559px;width:300px;top:860px;">196 035,000</div>
<div class="t r d n" style="left:654px;width:300px;top:860px;">802</div>
<div class="t r d n" style="left:738px;width:300px;top:860px;">196 035</div>
<div class="t r d n" style="left:854px;width:300px;top:860px;">196,035</div>
<div class="t r d n" style="left:918px;width:300px;top:860px;">-56</div>
<div class="t r d n" style="left:1003px;width:300px;top:860px;">-13 360,000</div>
<div class="t r d n" style="left:1097px;width:300px;top:860px;">-56</div>
<div class="t r d n" style="left:1181px;width:300px;top:860px;">-13 360</div>
<div class="t r d n" style="left:1299px;width:300px;top:860px;">-13,36</div>
<div class="t r d n" style="left:25px;width:300px;top:875px;">707</div>
<div class="t r d n" style="left:114px;width:300px;top:875px;">178 580,000</div>
<div class="t r d n" style="left:208px;width:300px;top:875px;">707</div>
<div class="t r d n" style="left:291px;width:300px;top:875px;">178 580</div>
<div class="t r d n" style="left:409px;width:300px;top:875px;">178,58</div>
<div class="t r d n" style="left:472px;width:300px;top:875px;">763</div>
<div class="t r d n" style="left:559px;width:300px;top:875px;">191 940,000</div>
<div class="t r d n" style="left:654px;width:300px;top:875px;">763</div>
<div class="t r d n" style="left:738px;width:300px;top:875px;">191 940</div>
<div class="t r d n" style="left:854px;width:300px;top:875px;">191,94</div>
<div class="t r d n" style="left:918px;width:300px;top:875px;">-56</div>
<div class="t r d n" style="left:1003px;width:300px;top:875px;">-13 360,000</div>
<div class="t r d n" style="left:1097px;width:300px;top:875px;">-56</div>
<div class="t r d n" style="left:1181px;width:300px;top:875px;">-13 360</div>
<div class="t r d n" style="left:1299px;width:300px;top:875px;">-13,36</div>
<div class="t r d n" style="left:25px;width:300px;top:890px;">39</div>
<div class="t r d n" style="left:114px;width:300px;top:890px;">4 095,000</div>
<div class="t r d n" style="left:208px;width:300px;top:890px;">39</div>
<div class="t r d n" style="left:291px;width:300px;top:890px;">4 095</div>
<div class="t r d n" style="left:409px;width:300px;top:890px;">4,095</div>
<div class="t r d n" style="left:472px;width:300px;top:890px;">39</div>
<div class="t r d n" style="left:559px;width:300px;top:890px;">4 095,000</div>
<div class="t r d n" style="left:654px;width:300px;top:890px;">39</div>
<div class="t r d n" style="left:738px;width:300px;top:890px;">4 095</div>
<div class="t r d n" style="left:854px;width:300px;top:890px;">4,095</div>
<div class="t r h" style="left:24px;width:300px;top:906px;">746</div>
<div class="t r h hl" style="left:113px;width:300px;top:906px;">182 675,000</div>
<div class="t r h" style="left:207px;width:300px;top:906px;">746</div>
<div class="t r h" style="left:290px;width:300px;top:906px;">182 675</div>
<div class="t r h hl" style="left:408px;width:300px;top:906px;">182,675</div>
<div class="t r h" style="left:471px;width:300px;top:906px;">802</div>
<div class="t r h" style="left:558px;width:300px;top:906px;">196 035,000</div>
<div class="t r h" style="left:653px;width:300px;top:906px;">802</div>
<div class="t r h" style="left:737px;width:300px;top:906px;">196 035</div>
<div class="t r h" style="left:853px;width:300px;top:906px;">196,035</div>
<div class="t r h" style="left:917px;width:300px;top:906px;">-56</div>
<div class="t r h" style="left:1002px;width:300px;top:906px;">-13 360,000</div>
<div class="t r h" style="left:1096px;width:300px;top:906px;">-56</div>
<div class="t r h" style="left:1180px;width:300px;top:906px;">-13 360</div>
<div class="t r h" style="left:1298px;width:300px;top:906px;">-13,36</div>
<div class="t h" style="left:61px;top:906px;">Итого</div>
<div class="t d" style="left:74px;top:860px;">Субагентский договор</div>
<div class="t d" style="left:88px;top:875px;">1</div>
<div class="t d" style="left:88px;top:890px;">2</div>
<div style="left:59px;top:845px;width:104px;height:14px;background:#fff;"></div>
<div style="left:59px;top:845px;width:104px;height:14px;filter:blur(2px);opacity:0.5;"><div style="left:3px;top:3.0px;width:16px;height:8px;background:#b0b0b0;border-radius:3px;"></div><div style="left:24px;top:3.0px;width:14px;height:8px;background:#b0b0b0;border-radius:3px;"></div><div style="left:50px;top:3.0px;width:36px;height:8px;background:#b0b0b0;border-radius:3px;"></div></div>
<div style="left:190px;top:860px;width:66px;height:13px;background:#fff;box-shadow:0 0 2px 1px #fff;"></div>
<div style="left:190px;top:860px;width:66px;height:13px;filter:blur(2px);opacity:0.5;"><div style="left:2px;top:3.0px;width:16px;height:8px;background:#b8b8b8;border-radius:3px;"></div><div style="left:21px;top:3.0px;width:11px;height:8px;background:#b8b8b8;border-radius:3px;"></div><div style="left:36px;top:3.0px;width:25px;height:8px;background:#b8b8b8;border-radius:3px;"></div></div>
<div class="" style="left:19px;top:670px;width:11px;height:11px;border:1px solid #b4b4b4;border-radius:2px;background:#fff;"></div>
<div class="l" style="left:21px;top:675px;width:7px;height:1px;background:#3c3c3c"></div>
<div class="l" style="left:24px;top:680px;width:1px;height:85px;background:#8c8c8c"></div>
<div class="l" style="left:24px;top:764px;width:33px;height:1px;background:#8c8c8c"></div>
<div class="l" style="left:24px;top:857px;width:1px;height:47px;background:#8c8c8c"></div>
<div class="l" style="left:37px;top:872px;width:1px;height:32px;background:#8c8c8c"></div>
<div class="l" style="left:24px;top:904px;width:33px;height:1px;background:#8c8c8c"></div>
<div class="" style="left:19px;top:847px;width:11px;height:11px;border:1px solid #b4b4b4;border-radius:2px;background:#fff;"></div>
<div class="l" style="left:21px;top:852px;width:7px;height:1px;background:#3c3c3c"></div>
<div class="" style="left:32px;top:862px;width:11px;height:11px;border:1px solid #b4b4b4;border-radius:2px;background:#fff;"></div>
<div class="l" style="left:34px;top:867px;width:7px;height:1px;background:#3c3c3c"></div>
<svg style="left:0;top:0" width="1613" height="944" viewBox="0 0 1613 944"><defs><filter id="ds" x="-10%" y="-10%" width="120%" height="120%"><feGaussianBlur in="SourceAlpha" stdDeviation="2.8"/><feOffset dx="3" dy="2.6"/><feComponentTransfer><feFuncA type="linear" slope="0.62"/></feComponentTransfer><feMerge><feMergeNode/><feMergeNode in="SourceGraphic"/></feMerge></filter></defs><g filter="url(#ds)"><polygon points="426.1,908.7 782.5,350.0 785.3,357.7 791.5,332.0 770.9,348.5 779.0,347.7 423.9,907.3" fill="#7d7d7d"/><polygon points="715.2,910.4 870.1,381.8 874.9,388.4 873.7,362.0 858.5,383.6 866.1,380.6 712.8,909.6" fill="#7d7d7d"/></g></svg>
</div></div>
</body></html>
